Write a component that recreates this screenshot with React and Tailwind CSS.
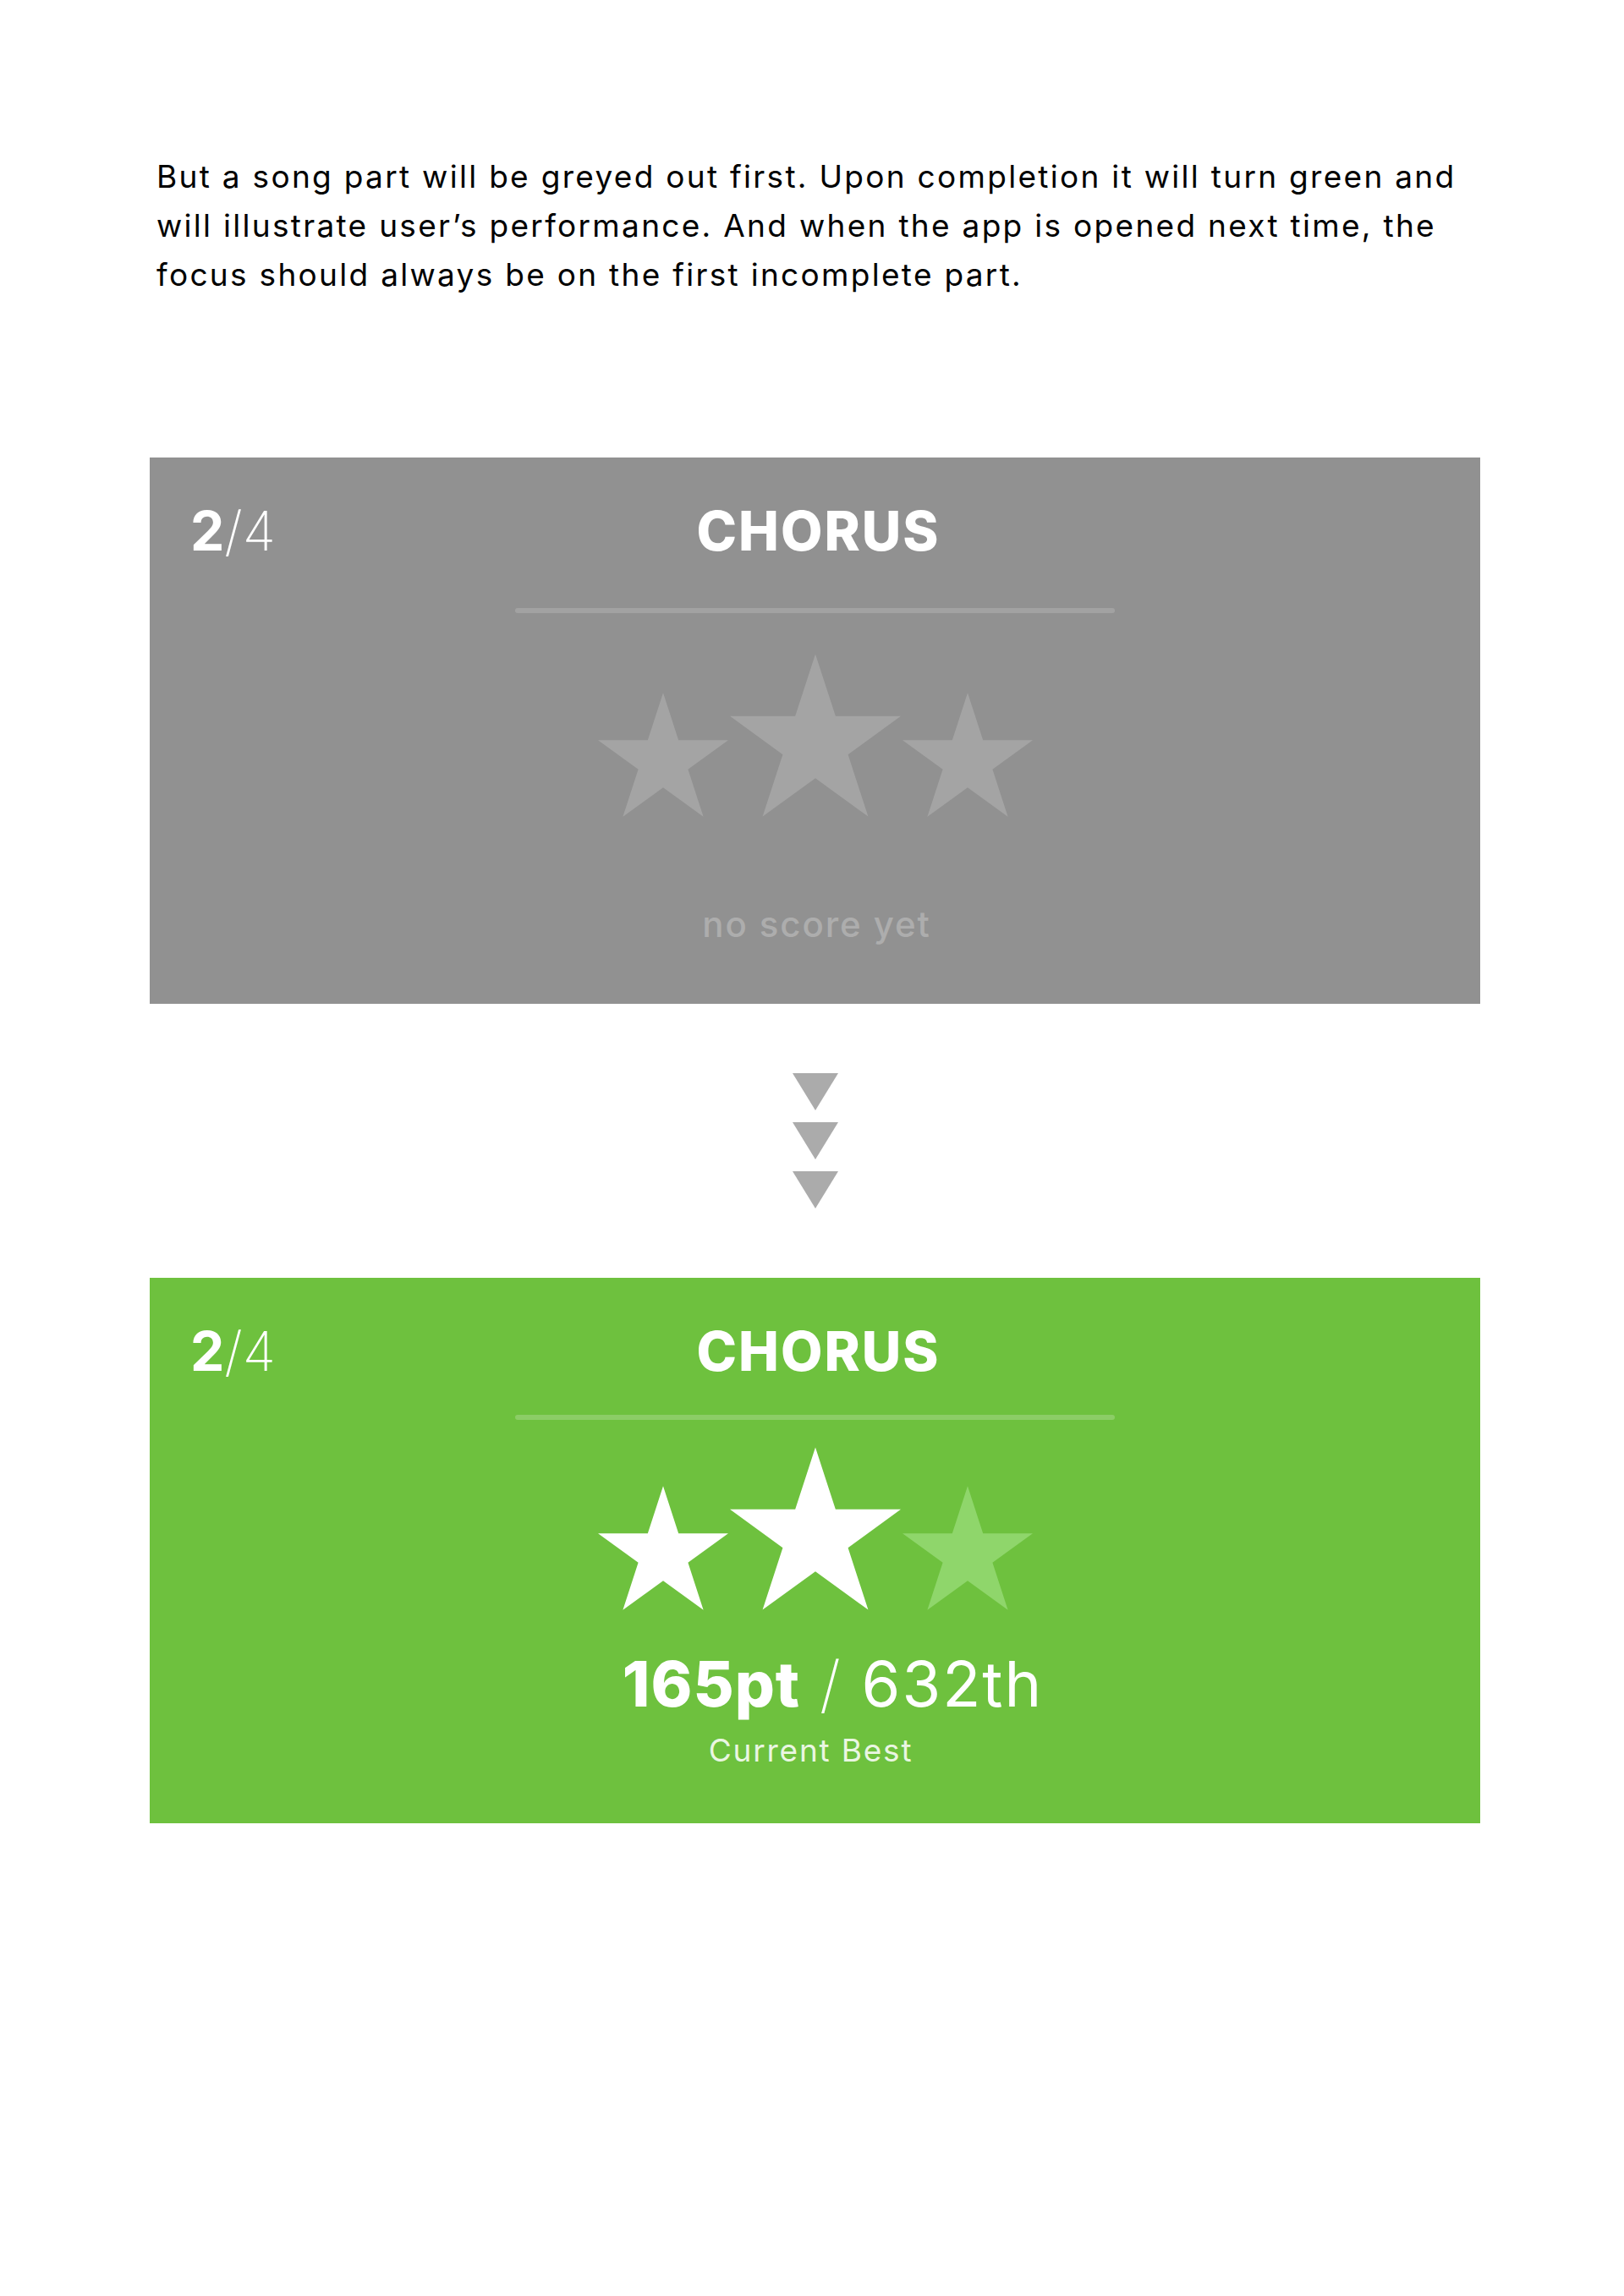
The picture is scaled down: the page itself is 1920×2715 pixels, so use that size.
import React from "react";

const STAR_POINTS =
  "0,-100 22.45,-30.9 95.11,-30.9 36.33,11.8 58.78,80.9 0,38.2 -58.78,80.9 -36.33,11.8 -95.11,-30.9 -22.45,-30.9";

function Star({ className, fill }) {
  return (
    <svg viewBox="-95.11 -100 190.22 180.9" className={className} aria-hidden="true">
      <polygon points={STAR_POINTS} fill={fill} />
    </svg>
  );
}

function Header() {
  return (
    <div className="grid grid-cols-[1fr_auto_1fr] items-baseline pt-[55px] text-white">
      <div className="pl-[48px] text-[64px] leading-none">
        <span className="font-bold">2</span>
        <span className="font-extralight">/4</span>
      </div>
      <div className="pl-[8px] text-[64px] leading-none font-extrabold tracking-[2px]">CHORUS</div>
      <div />
    </div>
  );
}

function Stars({ left, mid, right }) {
  return (
    <div className="flex items-end justify-center gap-[2px]">
      <Star className="w-[154px] h-[147px]" fill={left} />
      <Star className="w-[202px] h-[193px]" fill={mid} />
      <Star className="w-[154px] h-[147px]" fill={right} />
    </div>
  );
}

function Arrow() {
  return (
    <svg viewBox="0 0 54 44" className="w-[54px] h-[44px]" aria-hidden="true">
      <polygon points="0,0 54,0 27,44" fill="#ababab" />
    </svg>
  );
}

export default function App() {
  return (
    <div className="min-h-[2715px] bg-white font-['Inter','Open_Sans',sans-serif]">
      <p className="pt-[180px] pl-[185px] text-[37px] leading-[58px] text-black tracking-[2.3px] whitespace-nowrap">
        But a song part will be greyed out first. Upon completion it will turn green and
        <br />
        will illustrate user’s performance. And when the app is opened next time, the
        <br />
        focus should always be on the first incomplete part.
      </p>

      <section className="mt-[187px] ml-[177px] w-[1573px] h-[646px] bg-[#919191] flex flex-col">
        <Header />
        <div className="mx-auto mt-[59px] w-[709px] h-[6px] rounded-full bg-[#a2a2a2]" />
        <div className="mt-[48px]">
          <Stars left="#a4a4a4" mid="#a4a4a4" right="#a4a4a4" />
        </div>
        <div className="mt-[106px] pl-[4px] text-center text-[42px] leading-none font-medium text-[#adadad] tracking-[1.9px]">
          no score yet
        </div>
      </section>

      <div className="flex flex-col items-center gap-[14px] mt-[82px] ml-[177px] w-[1573px]">
        <Arrow />
        <Arrow />
        <Arrow />
      </div>

      <section className="mt-[82px] ml-[177px] w-[1573px] h-[645px] bg-[#6ec13e] flex flex-col">
        <Header />
        <div className="mx-auto mt-[43px] w-[709px] h-[6px] rounded-full bg-[#8ccd66]" />
        <div className="mt-[32px]">
          <Stars left="#ffffff" mid="#ffffff" right="#8fd66b" />
        </div>
        <div className="mt-[50px] pl-[42px] text-center text-[74px] leading-none text-white whitespace-nowrap tracking-[2px]">
          <span className="font-extrabold tracking-[1px]">165pt</span>
          <span className="font-extralight"> / </span>
          <span className="font-normal">632th</span>
        </div>
        <div className="mt-[23px] pr-[10px] text-center text-[37px] leading-none text-[#eaf6e2] tracking-[1.8px]">
          Current Best
        </div>
      </section>
    </div>
  );
}
